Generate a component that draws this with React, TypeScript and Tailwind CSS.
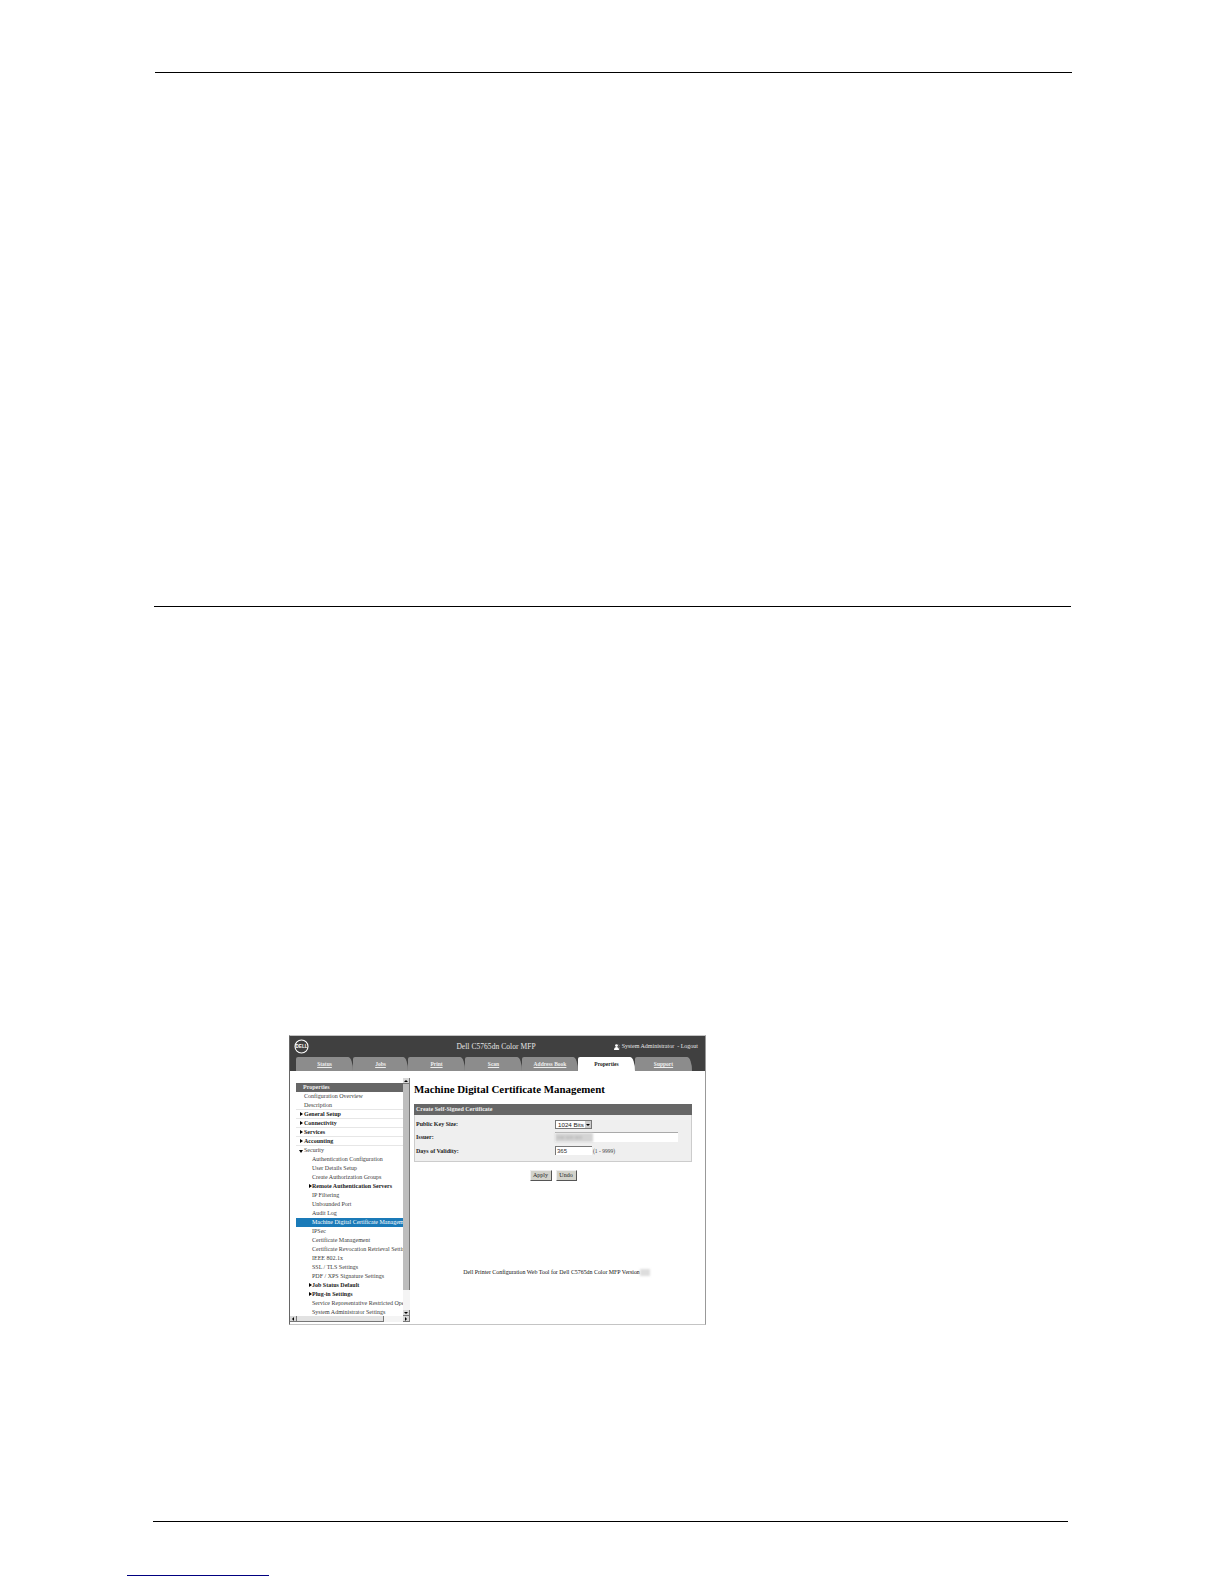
const tabs = [
  { label: "Status", w: "w-[57px]" },
  { label: "Jobs", w: "w-[55px]" },
  { label: "Print", w: "w-[57px]" },
  { label: "Scan", w: "w-[57px]" },
  { label: "Address Book", w: "w-[56px]" },
  { label: "Properties", w: "w-[57px]" },
  { label: "Support", w: "w-[57px]" },
];

const navItems: { label: string; level: number; bold?: boolean; arrow?: "right" | "down"; active?: boolean; line?: boolean }[] = [
  { label: "Configuration Overview", level: 0 },
  { label: "Description", level: 0, line: true },
  { label: "General Setup", level: 0, bold: true, arrow: "right", line: true },
  { label: "Connectivity", level: 0, bold: true, arrow: "right", line: true },
  { label: "Services", level: 0, bold: true, arrow: "right", line: true },
  { label: "Accounting", level: 0, bold: true, arrow: "right", line: true },
  { label: "Security", level: 0, arrow: "down" },
  { label: "Authentication Configuration", level: 1 },
  { label: "User Details Setup", level: 1 },
  { label: "Create Authorization Groups", level: 1 },
  { label: "Remote Authentication Servers", level: 1, bold: true, arrow: "right" },
  { label: "IP Filtering", level: 1 },
  { label: "Unbounded Port", level: 1 },
  { label: "Audit Log", level: 1 },
  { label: "Machine Digital Certificate Management", level: 1, active: true },
  { label: "IPSec", level: 1 },
  { label: "Certificate Management", level: 1 },
  { label: "Certificate Revocation Retrieval Settings", level: 1 },
  { label: "IEEE 802.1x", level: 1 },
  { label: "SSL / TLS Settings", level: 1 },
  { label: "PDF / XPS Signature Settings", level: 1 },
  { label: "Job Status Default", level: 1, bold: true, arrow: "right" },
  { label: "Plug-in Settings", level: 1, bold: true, arrow: "right" },
  { label: "Service Representative Restricted Operation", level: 1 },
  { label: "System Administrator Settings", level: 1 },
];

function Tab({ label, w }: { label: string; w: string }) {
  const active = label === "Properties";
  return (
    <div
      className={`${w} h-[14px] pt-[1px] rounded-tl-[2px] rounded-tr-[5px_14px] flex items-center justify-center text-[5.5px] font-bold ${
        active ? "bg-white text-[#222222]" : "bg-[#8c8c8c] text-[#eeeeee] underline"
      }`}
    >
      {label}
    </div>
  );
}

function ScrollBtn({ dir }: { dir: "up" | "down" | "left" | "right" }) {
  return (
    <div className="w-[7px] h-[6px] shrink-0 bg-[#d8d8d8] border-r border-b border-[#777777] flex items-center justify-center">
      {dir === "up" && <span className="w-0 h-0 border-x-[2px] border-x-transparent border-b-[2px] border-b-black" />}
      {dir === "down" && <span className="w-0 h-0 border-x-[2px] border-x-transparent border-t-[2px] border-t-black" />}
      {dir === "left" && <span className="w-0 h-0 border-y-[2px] border-y-transparent border-r-[2px] border-r-black" />}
      {dir === "right" && <span className="w-0 h-0 border-y-[2px] border-y-transparent border-l-[2px] border-l-black" />}
    </div>
  );
}

function Button({ label, w }: { label: string; w: string }) {
  return (
    <div className={`${w} h-[11px] bg-[#d2d2ca] border-r border-b border-[#555555] border-t border-l border-t-[#eeeeee] border-l-[#eeeeee] flex items-center justify-center text-[6px] text-[#222222]`}>
      {label}
    </div>
  );
}

function App() {
  return (
    <div className="w-[1224px] h-[1584px] bg-white overflow-hidden font-['Liberation_Serif',serif]">
      <div className="h-[72px]" />
      <div className="ml-[155px] w-[917px] h-px bg-black" />
      <div className="h-[533px]" />
      <div className="ml-[154px] w-[917px] h-px bg-black" />

      {/* screenshot */}
      <div className="h-[428px]" />
      <div className="ml-[289px] w-[417px] h-[290px] border border-[#c4c4c4] border-l-[#666666] border-r-[#999999] flex flex-col overflow-hidden">
        <div className="h-[21px] bg-[#404040] flex items-center pl-[4px] pr-[7px] text-[#e6e6e6] shrink-0">
          <div className="flex-1">
            <svg width="15" height="15" viewBox="0 0 15 15">
              <circle cx="7.5" cy="7.5" r="6.5" fill="none" stroke="#fff" strokeWidth="1.1" />
              <text x="7.5" y="9.3" textAnchor="middle" fontSize="4.6" fontWeight="700" fill="#fff" fontFamily="Liberation Sans, sans-serif">DELL</text>
            </svg>
          </div>
          <div className="text-[7.5px] tracking-[0.05px] whitespace-nowrap">Dell C5765dn Color MFP</div>
          <div className="flex-1 flex justify-end items-center gap-[2px] text-[6px] whitespace-nowrap">
            <svg width="6" height="6" viewBox="0 0 6 6">
              <circle cx="2.5" cy="1.6" r="1.4" fill="#fff" />
              <path d="M0 6c0-2 1-3 2.5-3S5 4 5 6z" fill="#fff" />
              <path d="M4.6 0.6a1.2 1.2 0 0 1 0 2.1M5.4 3.4c.4.6.6 1.4.6 2.4" stroke="#bbb" strokeWidth="0.5" fill="none" />
            </svg>
            System Administrator&nbsp; - Logout
          </div>
        </div>
        <div className="h-[14px] bg-[#404040] flex pl-[6px] shrink-0">
          {tabs.map((t) => (
            <Tab key={t.label} label={t.label} w={t.w} />
          ))}
        </div>
        <div className="flex-1 flex min-h-0">
          {/* left nav */}
          <div className="w-[120px] shrink-0 flex flex-col min-h-0">
            <div className="flex-1 flex min-h-0">
              <div className="w-[113px] pl-[6px] pt-[12px] overflow-hidden">
                <div className="h-[8.5px] bg-[#666666] text-[#eeeeee] text-[6px] font-bold pl-[7px] leading-[9px]">Properties</div>
                {navItems.map((n) => (
                  <div
                    key={n.label}
                    className={`h-[9px] text-[6px] leading-[9px] whitespace-nowrap overflow-hidden relative ${
                      n.active ? "bg-[#1a7ab8] text-white" : "text-[#3c3c3c]"
                    } ${n.bold ? "font-bold text-[#222222]" : ""} ${n.line ? "border-b border-[#e6e6e6]" : ""} ${
                      n.level === 1 ? "pl-[16px]" : "pl-[8px]"
                    }`}
                  >
                    {n.arrow === "right" && (
                      <span className={`absolute top-[2px] ${n.level === 1 ? "left-[13px]" : "left-[4px]"} w-0 h-0 border-y-[2.5px] border-y-transparent border-l-[3px] border-l-black`} />
                    )}
                    {n.arrow === "down" && (
                      <span className="absolute top-[4px] left-[3px] w-0 h-0 border-x-[2.5px] border-x-transparent border-t-[3px] border-t-black" />
                    )}
                    {n.label}
                  </div>
                ))}
              </div>
              {/* vertical scrollbar */}
              <div className="w-[7px] flex flex-col pt-[7px] bg-white">
                <ScrollBtn dir="up" />
                <div className="h-[206px] bg-[#bdbdbd] border-r border-[#777777]" />
                <div className="flex-1 bg-[#f4f4f4]" />
                <ScrollBtn dir="down" />
              </div>
            </div>
            {/* horizontal scrollbar */}
            <div className="h-[6px] mb-[2px] flex shrink-0">
              <ScrollBtn dir="left" />
              <div className="w-[87px] bg-[#e2e2e2] border-b border-r border-[#777777]" />
              <div className="flex-1 bg-[#f4f4f4]" />
              <ScrollBtn dir="right" />
            </div>
          </div>

          {/* content */}
          <div className="flex-1 pl-[4px] pt-[11px] min-w-0">
            <div className="text-[10.9px] font-bold text-black leading-[14px] whitespace-nowrap">Machine Digital Certificate Management</div>
            <div className="mt-[8px] w-[278px]">
              <div className="h-[11px] bg-[#666666] text-[#eeeeee] text-[6px] font-bold leading-[11px] pl-[2px]">Create Self-Signed Certificate</div>
              <div className="h-[47px] bg-[#efefef] border border-t-0 border-[#cccccc] pl-[1px] pt-[5px]">
                <div className="flex items-center h-[9px]">
                  <div className="w-[139px] text-[6px] font-bold text-[#222222]">Public Key Size:</div>
                  <div className="w-[37px] h-[9px] bg-white border border-[#777777] flex items-center justify-between font-['Liberation_Sans',sans-serif] text-[6.2px] text-[#222222] pl-[2px]">
                    1024 Bits
                    <span className="w-[6px] h-full bg-[#cccccc] flex items-center justify-center">
                      <span className="w-0 h-0 border-x-[2px] border-x-transparent border-t-[2px] border-t-black" />
                    </span>
                  </div>
                </div>
                <div className="flex items-center h-[10px] mt-[3px]">
                  <div className="w-[139px] pt-[1px] text-[6px] font-bold text-[#222222]">Issuer:</div>
                  <div className="w-[123px] h-[10px] bg-white border-t border-[#aaaaaa] flex items-center">
                    <div className="w-[38px] h-[9px] bg-[#d4d4d4] blur-[1px] text-[5px] text-[#999999] pl-[2px] leading-[9px] whitespace-nowrap">###  ###  ###</div>
                  </div>
                </div>
                <div className="flex items-center h-[9px] mt-[4px]">
                  <div className="w-[139px] pt-[1px] text-[6px] font-bold text-[#222222]">Days of Validity:</div>
                  <div className="w-[37px] h-[9px] bg-white border-t border-l border-[#777777] font-['Liberation_Sans',sans-serif] text-[6px] leading-[8px] text-[#333333] pl-[1px]">365</div>
                  <div className="ml-[1px] mt-[2px] text-[5.5px] text-[#444444] whitespace-nowrap">(1 - 9999)</div>
                </div>
              </div>
              <div className="mt-[8px] flex justify-center gap-[4px]">
                <Button label="Apply" w="w-[22px]" />
                <Button label="Undo" w="w-[21px]" />
              </div>
            </div>
            <div className="mt-[87px] pr-[6px] flex justify-center items-center text-[5.9px] leading-[8px] text-[#111111] whitespace-nowrap">
              Dell Printer Configuration Web Tool for Dell C5765dn Color MFP Version
              <span className="w-[10px] h-[7px] bg-[#dddddd] blur-[1px]" />
            </div>
          </div>
        </div>
      </div>
      <div className="h-[196px]" />
      <div className="ml-[153px] w-[915px] h-px bg-black" />
      <div className="h-[53px]" />
      <div className="ml-[127px] w-[142px] h-px bg-[#000080]" />
    </div>
  );
}

export default App;
